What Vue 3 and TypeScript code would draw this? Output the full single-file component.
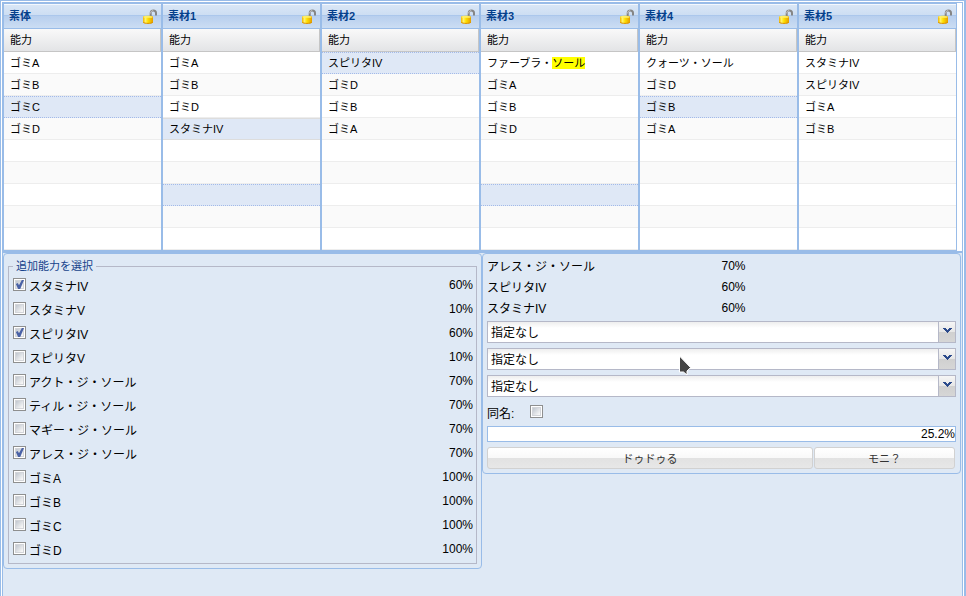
<script setup lang="ts">
import { ref } from 'vue'

type RowState = 'selected' | 'hovered'

interface Material {
  title: string
  abilities: string[]
  states: Record<number, RowState>
}

interface Candidate {
  name: string
  rate: number
  checked: boolean
}

const ROW_COUNT = 9
const keyword = 'ソール'

const materials = ref<Material[]>([
  { title: '素体', abilities: ['ゴミA', 'ゴミB', 'ゴミC', 'ゴミD'], states: { 2: 'selected' } },
  { title: '素材1', abilities: ['ゴミA', 'ゴミB', 'ゴミD', 'スタミナIV'], states: { 3: 'hovered', 6: 'selected' } },
  { title: '素材2', abilities: ['スピリタIV', 'ゴミD', 'ゴミB', 'ゴミA'], states: { 0: 'selected' } },
  { title: '素材3', abilities: ['ファーブラ・ソール', 'ゴミA', 'ゴミB', 'ゴミD'], states: { 6: 'selected' } },
  { title: '素材4', abilities: ['クォーツ・ソール', 'ゴミD', 'ゴミB', 'ゴミA'], states: { 2: 'selected' } },
  { title: '素材5', abilities: ['スタミナIV', 'スピリタIV', 'ゴミA', 'ゴミB'], states: {} },
])

const candidates = ref<Candidate[]>([
  { name: 'スタミナIV', rate: 60, checked: true },
  { name: 'スタミナV', rate: 10, checked: false },
  { name: 'スピリタIV', rate: 60, checked: true },
  { name: 'スピリタV', rate: 10, checked: false },
  { name: 'アクト・ジ・ソール', rate: 70, checked: false },
  { name: 'ティル・ジ・ソール', rate: 70, checked: false },
  { name: 'マギー・ジ・ソール', rate: 70, checked: false },
  { name: 'アレス・ジ・ソール', rate: 70, checked: true },
  { name: 'ゴミA', rate: 100, checked: false },
  { name: 'ゴミB', rate: 100, checked: false },
  { name: 'ゴミC', rate: 100, checked: false },
  { name: 'ゴミD', rate: 100, checked: false },
])

const results = [
  { name: 'アレス・ジ・ソール', rate: 70 },
  { name: 'スピリタIV', rate: 60 },
  { name: 'スタミナIV', rate: 60 },
]

const options = ref<string[]>(['指定なし', '指定なし', '指定なし'])
const sameName = ref(false)

function isHighlighted(name: string): boolean {
  return name === 'ファーブラ・ソール'
}

function prefixOf(name: string): string {
  return name.slice(0, name.length - keyword.length)
}
</script>

<template>
  <div class="viewport">
    <main class="frame">
      <section class="materials">
        <article v-for="m in materials" :key="m.title" class="grid-panel">
          <header class="panel-header">
            <h2>{{ m.title }}</h2>
            <button type="button" class="lock" :aria-label="m.title">
              <svg viewBox="0 0 16 16" width="16" height="16" aria-hidden="true">
                <defs>
                  <linearGradient id="gold" x1="0" x2="1" y1="0" y2="0">
                    <stop offset="0" stop-color="#f0b400" />
                    <stop offset="0.25" stop-color="#fff36a" />
                    <stop offset="0.5" stop-color="#ffe000" />
                    <stop offset="1" stop-color="#e39c00" />
                  </linearGradient>
                </defs>
                <path d="M8.7 8.4V5C8.7 3.2 9.9 2.4 11.4 2.4S14 3.4 14 5V7.6" fill="none" stroke="#858585" stroke-width="2" />
                <path d="M8.6 5.4C8.8 3.4 10 2.6 11.2 2.5" fill="none" stroke="#c9c9c9" stroke-width="1" />
                <path d="M1 8.8C1 7.5 11 7.5 11 8.8V14.6C11 16 1 16 1 14.6Z" fill="url(#gold)" />
                <ellipse cx="6" cy="8.9" rx="4.6" ry="0.9" fill="#fff06a" />
                <path d="M1.2 14.2C2 15.8 10 15.8 10.8 14.2" fill="none" stroke="#d88e00" stroke-width="1" />
              </svg>
            </button>
          </header>
          <table class="grid">
            <thead>
              <tr><th scope="col">能力</th></tr>
            </thead>
            <tbody>
              <tr v-for="n in ROW_COUNT" :key="n" :class="m.states[n - 1]">
                <td>
                  <template v-if="isHighlighted(m.abilities[n - 1] ?? '')">{{ prefixOf(m.abilities[n - 1]) }}<mark>{{ keyword }}</mark></template>
                  <template v-else>{{ m.abilities[n - 1] }}</template>
                </td>
              </tr>
            </tbody>
          </table>
        </article>
      </section>

      <section class="workspace">
        <form class="panel select-panel" @submit.prevent>
          <fieldset>
            <legend>追加能力を選択</legend>
            <div v-for="(c, i) in candidates" :key="c.name" class="candidate">
              <input :id="`candidate-${i}`" v-model="c.checked" type="checkbox" class="check" />
              <label :for="`candidate-${i}`">{{ c.name }}</label>
              <span class="rate">{{ c.rate }}%</span>
            </div>
          </fieldset>
        </form>

        <form class="panel result-panel" @submit.prevent>
          <dl class="results">
            <div v-for="r in results" :key="r.name" class="result">
              <dt>{{ r.name }}</dt>
              <dd>{{ r.rate }}%</dd>
            </div>
          </dl>
          <div v-for="(_, i) in options" :key="i" class="combo">
            <select v-model="options[i]" :aria-label="`option ${i + 1}`">
              <option>指定なし</option>
            </select>
            <span class="trigger">
              <svg viewBox="0 0 9 6" width="9" height="6" shape-rendering="crispEdges" aria-hidden="true">
                <path d="M0 0H3V1H4V2H5V1H6V0H9V1H8V2H7V3H6V4H5V5H4V4H3V3H2V2H1V1H0Z" fill="#2b4a8b" />
              </svg>
            </span>
          </div>
          <div class="same-name">
            <label for="same-name">同名:</label>
            <input id="same-name" v-model="sameName" type="checkbox" class="check" />
          </div>
          <output class="total">25.2%</output>
          <div class="actions">
            <button type="button" class="action wide">ドゥドゥる</button>
            <button type="button" class="action">モニ？</button>
          </div>
        </form>
      </section>
    </main>
    <svg class="pointer" viewBox="0 0 14 22" width="14" height="22" aria-hidden="true">
      <path d="M1.5 1V17H5.5L9 20V16L12.6 12.6Z" fill="#444" stroke="#fff" stroke-width="1" />
    </svg>
  </div>
</template>

<style>
body {
  margin: 0;
  background: #fff;
}
</style>

<style scoped>
.viewport {
  position: relative;
  box-sizing: border-box;
  display: flex;
  min-height: 100vh;
  padding: 1px 1px 0;
  border: solid #99bce8;
  border-width: 1px 2px 0 1px;
  color: #000;
  font-family: "Liberation Sans", "Noto Sans CJK JP", sans-serif;
  font-size: 12px;
}

.frame {
  flex: 1;
  display: flex;
  flex-direction: column;
  min-width: 0;
}

.materials {
  display: flex;
  padding-right: 5px;
  border: 1px solid #99bce8;
  background: #fff;
}

.grid-panel {
  flex: 1;
  min-width: 0;
  border: 1px solid #99bce8;
  font-size: 11px;
}

.panel-header {
  display: flex;
  align-items: center;
  justify-content: space-between;
  height: 24px;
  padding: 0 3px 0 5px;
  border-bottom: 1px solid #99bce8;
  background: linear-gradient(#dae7f6, #cddef3 45%, #abc7ec 46%, #abc7ec 50%, #b8cfee 51%, #cbddf3);
  box-shadow: inset 0 1px #f4f8fd;
}

.panel-header h2 {
  margin: 0;
  color: #04408c;
  font-size: 11px;
  line-height: 16px;
}

.lock {
  width: 16px;
  height: 16px;
  padding: 0;
  border: 0;
  background: none;
}

.lock svg {
  display: block;
}

.grid {
  width: 100%;
  border-spacing: 0;
  table-layout: fixed;
}

.grid th {
  box-sizing: border-box;
  height: 23px;
  padding: 0 6px;
  border: solid #c5c5c5;
  border-width: 0 1px 1px 0;
  background: linear-gradient(#f9f9f9, #e3e4e6);
  font-weight: normal;
  line-height: 22px;
  text-align: left;
}

.grid td {
  box-sizing: border-box;
  height: 22px;
  padding: 0 6px;
  border: solid #ededed;
  border-width: 1px 0;
  border-top-color: #fff;
  line-height: 20px;
  white-space: nowrap;
}

.grid tr:nth-child(even) td {
  border-top-color: #fafafa;
  background: #fafafa;
}

.grid tr.selected td {
  border-style: dotted;
  border-color: #a3bae9;
  background: #dfe8f6;
}

.grid tr.hovered td {
  border-color: #ddd;
  background: #dfe8f6;
}

mark {
  background: #ff0;
  color: inherit;
}

.workspace {
  flex: 1;
  display: flex;
  align-items: flex-start;
  padding-right: 1px;
  border: solid #99bce8;
  border-width: 1px 1px 0;
  background: #dfe9f5;
}

.panel {
  box-sizing: border-box;
  flex: 1;
  min-width: 0;
  border: 1px solid #99bce8;
  border-radius: 4px;
  background: #dfe9f5;
}

.select-panel {
  padding: 6px 4px 4px;
}

fieldset {
  min-width: 0;
  margin: 0;
  padding: 1px 3px 1px 4px;
  border: 1px solid #b5b8c8;
}

legend {
  padding: 0 3px;
  color: #15428b;
  font-size: 11px;
  line-height: 13px;
}

.candidate {
  display: flex;
  height: 24px;
  align-items: flex-start;
}

.candidate .check {
  margin-top: 4px;
}

.candidate label {
  flex: 1;
  padding: 2px 0 0 3px;
  line-height: 22px;
}

.rate {
  line-height: 22px;
}

.check {
  appearance: none;
  box-sizing: border-box;
  display: grid;
  flex: none;
  width: 13px;
  height: 13px;
  margin: 0;
  border: 1px solid #8e8f8f;
  background: linear-gradient(135deg, #c2c8d0 20%, #f6f6f6 75%);
  box-shadow: inset 0 0 0 1px #fff, inset 0 0 0 2px #d3d5d9;
}

.check:checked::before {
  content: "";
  width: 9px;
  height: 9px;
  margin: 1px;
  background: #4a62a6;
  clip-path: polygon(10% 44%, 32% 34%, 44% 58%, 76% 0, 100% 0, 58% 100%, 34% 100%);
}

.result-panel {
  padding: 2px 4px 4px;
}

.results {
  margin: 0 0 2px;
}

.result {
  display: grid;
  grid-template-columns: 1fr 1fr;
  height: 21px;
  line-height: 21px;
}

.result dt {
  line-height: 23px;
}

.result dd {
  margin: 0;
}

.combo {
  display: grid;
  height: 22px;
  margin-bottom: 5px;
}

.combo select {
  grid-area: 1 / 1;
  appearance: none;
  width: 100%;
  height: 22px;
  padding: 2px 20px 0 3px;
  border: 1px solid #b5b8c8;
  border-radius: 0;
  background: linear-gradient(#eee, #fff 6px);
  color: #000;
  font: inherit;
}

.trigger {
  grid-area: 1 / 1;
  justify-self: end;
  box-sizing: border-box;
  display: grid;
  place-items: center;
  width: 18px;
  height: 22px;
  padding-bottom: 2px;
  border: 1px solid #b5b8c8;
  background: linear-gradient(#f6f6f6, #e6e6e6 50%, #d0d0d0 51%, #d6d6d6);
  pointer-events: none;
}

.same-name {
  display: flex;
  height: 19px;
  margin-bottom: 5px;
}

.same-name label {
  width: 43px;
  line-height: 24px;
}

.same-name .check {
  margin-top: 3px;
}

.total {
  box-sizing: border-box;
  display: block;
  height: 16px;
  margin-bottom: 5px;
  border: 1px solid #99bce8;
  background: #fff;
  line-height: 14px;
  text-align: right;
}

.actions {
  display: flex;
  gap: 1px;
  padding-right: 1px;
}

.action {
  flex: 3 1 0;
  height: 22px;
  padding: 0;
  border: 1px solid #d1d1d1;
  border-radius: 3px;
  background: linear-gradient(#fff, #f9f9f9 48%, #e2e2e2 52%, #e7e7e7);
  color: #333;
  font-family: inherit;
  font-size: 11px;
}

.action.wide {
  flex-grow: 7;
}

.pointer {
  position: absolute;
  top: 354px;
  left: 677px;
  pointer-events: none;
}
</style>
